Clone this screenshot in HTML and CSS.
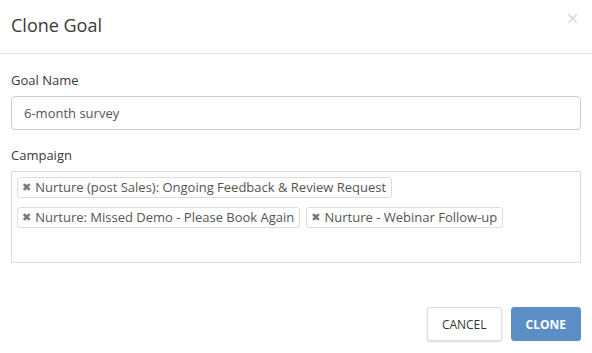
FILE: index.html
```html
<!DOCTYPE html>
<html lang="en">
<head>
  <meta charset="UTF-8">
  <title>Clone Goal</title>
  <link rel="stylesheet" href="styles.css">
</head>
<body>
  <div class="modal">
    <div class="modal-header">
      <h2>Clone Goal</h2>
      <button type="button" class="close">&times;</button>
    </div>
    <div class="modal-body">
      <div class="field">
        <label for="goalName">Goal Name</label>
        <input type="text" id="goalName" value="6-month survey">
      </div>
      <div class="field">
        <label>Campaign</label>
        <ul class="tags">
          <li class="tag"><span class="x">&#x2716;</span>Nurture (post Sales): Ongoing Feedback &amp; Review Request</li>
          <li class="tag"><span class="x">&#x2716;</span>Nurture: Missed Demo - Please Book Again</li>
          <li class="tag"><span class="x">&#x2716;</span>Nurture - Webinar Follow-up</li>
        </ul>
      </div>
    </div>
    <div class="modal-footer">
      <button type="button" class="btn btn-default">CANCEL</button>
      <button type="button" class="btn btn-primary">CLONE</button>
    </div>
  </div>
</body>
</html>
```

FILE: styles.css
```css
* { margin:0; padding:0; box-sizing:border-box }
body {
  background:#fff; color:#333;
  font-family:'Open Sans','Noto Sans',sans-serif;
  font-size:13px;
}
.modal { width:592px; height:353px; display:flex; flex-direction:column; }
.modal-header {
  display:flex; justify-content:space-between; align-items:flex-start;
  height:54px; padding:13px 11px 0 11px; border-bottom:1px solid #e5e5e5;
}
.modal-header h2 { font-size:18px; font-weight:400; line-height:24px; color:#3a3a3a; }
.close {
  background:none; border:none; color:#c8c8c8; font-size:18px; line-height:14px;
  font-family:'DejaVu Sans',sans-serif; font-weight:300;
  margin-top:-2px; margin-right:1px; cursor:pointer;
}
.modal-body { padding:17px 11px 0 11px; }
.field { margin-bottom:16px; }
label { display:block; font-size:13px; line-height:18px; margin-bottom:7px; color:#3a3a3a; }
input[type=text] {
  width:100%; height:34px; padding:0 12px; border:1px solid #ccc; border-radius:4px;
  font-family:inherit; font-size:13px; color:#555;
}
.tags {
  list-style:none; display:flex; flex-wrap:wrap; align-content:flex-start; gap:9px 6px;
  height:92px; padding:5px 5px; border:1px solid #ddd;
}
.tag {
  height:21px; line-height:19px; padding:0 5px 0 4px; border:1px solid #ddd; border-radius:3px;
  font-size:13px; color:#555; background:#fff;
}
.tag .x { color:#777; font-size:11px; margin-right:4px; position:relative; top:-1px; font-family:'DejaVu Sans',sans-serif; }
.modal-footer { display:flex; justify-content:flex-end; gap:9px; padding:28px 11px 0 11px; }
.btn {
  height:34px; padding:0 14px; border-radius:3px; font-family:inherit; font-size:12px; cursor:pointer;
}
.btn-default { background:#fff; color:#333; border:1px solid #ddd; box-shadow:0 1px 2px rgba(0,0,0,0.15); }
.btn-primary { background:#5b8ec4; color:#fff; border:1px solid #5b8ec4; font-weight:700; padding:0 14px; }
```
